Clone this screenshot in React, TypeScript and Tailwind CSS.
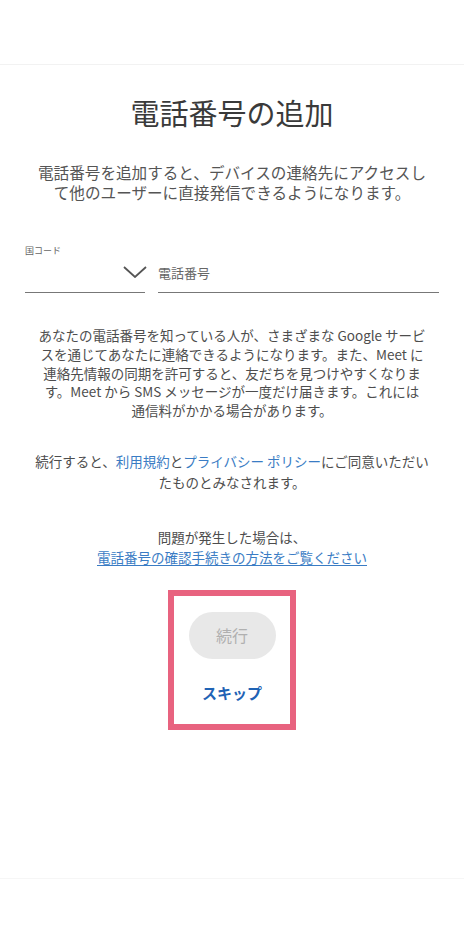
export default function App() {
  return (
    <div
      className="flex h-[944px] w-full flex-col bg-white text-[#444]"
      style={{ fontFamily: '"Noto Sans CJK JP", "Noto Sans", sans-serif' }}
    >
      <div className="h-[65px] shrink-0 border-b border-[#f2f2f2]" />

      <main className="flex flex-1 flex-col items-center">
        <h1 className="mt-[29px] text-[29px] leading-[36px] font-normal text-[#3a3a3a]">
          電話番号の追加
        </h1>
        <p className="mt-[32px] px-[28px] text-center text-[15.6px] leading-[20px] text-[#555]">
          電話番号を追加すると、デバイスの連絡先にアクセスし
          <br />
          て他のユーザーに直接発信できるようになります。
        </p>

        <div className="mt-[43px] w-full px-[25px]">
          <div className="text-[9px] leading-[12px] text-[#666]">国コード</div>
          <div className="mt-[4px] flex gap-[13px]">
            <div className="flex h-[32px] w-[120px] items-center justify-end border-b-[1.5px] border-[#777]">
              <svg width="24" height="12" viewBox="0 0 24 12" className="-mt-[10px] -mr-[2px]">
                <path d="M1 1 L12 11 L23 1" fill="none" stroke="#555" strokeWidth="1.8" />
              </svg>
            </div>
            <div className="flex h-[32px] flex-1 items-center border-b-[1.5px] border-[#777] pb-[8px] text-[13px] text-[#666]">
              電話番号
            </div>
          </div>
        </div>

        <p className="mt-[33px] px-[20px] text-center text-[13.5px] leading-[18.75px] text-[#4d4d4d]">
          あなたの電話番号を知っている人が、さまざまな Google サービ
          <br />
          スを通じてあなたに連絡できるようになります。また、Meet に
          <br />
          連絡先情報の同期を許可すると、友だちを見つけやすくなりま
          <br />
          す。Meet から SMS メッセージが一度だけ届きます。これには
          <br />
          通信料がかかる場合があります。
        </p>

        <p className="mt-[31px] text-center text-[13.5px] leading-[21px] text-[#4d4d4d]">
          続行すると、<span className="text-[#3a7cc4]">利用規約</span>と
          <span className="text-[#3a7cc4]">プライバシー ポリシー</span>にご同意いただい
          <br />
          たものとみなされます。
        </p>

        <p className="mt-[34px] text-center text-[13.5px] leading-[20px] text-[#4d4d4d]">
          問題が発生した場合は、
          <br />
          <a className="text-[#3a7cc4] underline underline-offset-2">
            電話番号の確認手続きの方法をご覧ください
          </a>
        </p>

        <div className="mt-[23px] flex w-[128px] flex-col items-center border-[6px] border-[#e8637f] pt-[16px] pb-[21px]">
          <button className="h-[47px] w-[87px] rounded-full bg-[#e8e8e8] text-[16px] text-[#b0b0b0]">
            続行
          </button>
          <button className="mt-[24px] text-[15px] leading-[20px] font-bold text-[#1f63b5]">
            スキップ
          </button>
        </div>
      </main>

      <div className="h-[66px] shrink-0 border-t border-[#f6f6f6] bg-white" />
    </div>
  );
}
